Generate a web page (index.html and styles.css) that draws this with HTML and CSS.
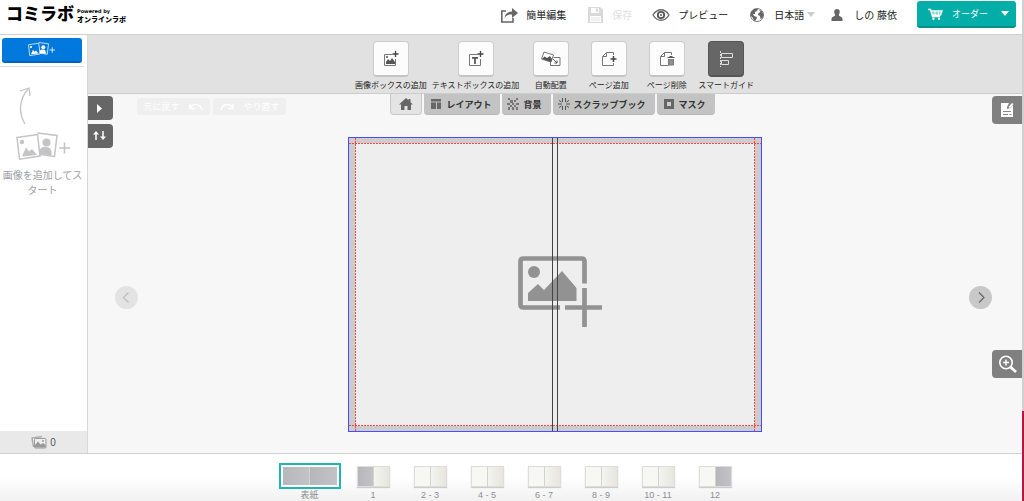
FILE: index.html
```html
<!DOCTYPE html>
<html lang="ja">
<head>
<meta charset="utf-8">
<meta name="viewport" content="width=device-width, initial-scale=1">
<title>コミラボ</title>
<link rel="stylesheet" href="styles.css">
</head>
<body>
<div class="app">
  <header class="header">
    <div class="logo">
      <span class="logo-main">コミラボ</span>
      <span class="logo-sub"><small>Powered by</small><b>オンラインラボ</b></span>
    </div>
    <nav class="menu">
      <button class="menu-item"><svg width="18" height="16" viewBox="0 0 18 16"><path d="M6 4H1.800v11H13v-4" fill="none" stroke="#666" stroke-width="1.600"/><path d="M4.500 11C5 6.500 8 4.500 12 4.500V1l6 5-6 5V7.500C9 7.300 6.500 8 4.500 11z" fill="#666"/></svg>簡単編集</button>
      <button class="menu-item" disabled><svg width="18" height="16" viewBox="0 0 18 16"><path d="M2 0h12l3 3v13H2z" fill="#d9d9d9"/><path d="M5 1h8v5H5zM4 9h11v6H4z" fill="#fff"/><path d="M10 1.500h2v3.500h-2z" fill="#d9d9d9"/><path d="M5 11h9M5 13h9" stroke="#e4e4e4"/></svg>保存</button>
      <button class="menu-item"><svg width="18" height="16" viewBox="0 0 18 16"><path d="M1 8c4.500-7 11.500-7 16 0-4.500 7-11.500 7-16 0z" fill="none" stroke="#666" stroke-width="1.300"/><circle cx="9" cy="8" r="3.200" fill="none" stroke="#555" stroke-width="1.800"/><circle cx="9" cy="8" r="1" fill="#555"/></svg>プレビュー</button>
      <button class="menu-item lang"><svg width="18" height="16" viewBox="0 0 18 16"><circle cx="9" cy="8" r="6.500" fill="#fff" stroke="#777"/><path d="M3 5l3-3 4 0-1 2-2 1 0 2-2 0 1 2 3 1-1 3-2 1-1-3-2-2zM11 3l3 1 1.500 4-1 3-2 1-.5-3-2-1 .5-2 2-1z" fill="#666"/></svg>日本語<i class="caret"></i></button>
      <button class="menu-item user"><svg width="12" height="16" viewBox="0 0 12 16"><path d="M6 2c3 0 3.500 3 1.800 6 .2 1.500 3.700 1.500 3.700 4v2H.5v-2c0-2.500 3.500-2.500 3.700-4C2.500 5 3 2 6 2z" fill="#666"/></svg>しの 藤依</button>
      <button class="order"><svg width="15" height="12" viewBox="0 0 15 12"><path d="M0 1.500h2.500L4.500 8.500h7.500M3 3h11l-1.500 4H4" fill="none" stroke="#fff" stroke-width="1.400"/><path d="M4 5h9M7 3v4M10.500 3v4" stroke="#fff"/><circle cx="5.500" cy="10.700" r="1.200" fill="#fff"/><circle cx="11" cy="10.700" r="1.200" fill="#fff"/></svg>オーダー<i class="caret"></i></button>
    </nav>
  </header>

  <div class="main">
    <aside class="sidebar">
      <div class="add-wrap">
        <button class="add" aria-label="画像を追加"><svg width="28" height="15" viewBox="0 0 56 30"><use href="#photos"/></svg></button>
      </div>
      <div class="hint">
        <svg width="14" height="38" viewBox="0 0 14 38"><path d="M6 37C0 27-1 14 9 2M1 4l9-3 1 8" fill="none" stroke="#c4c4c7" stroke-width="1.300"/></svg>
        <svg class="hint-pic" width="56" height="30" viewBox="0 0 56 30">
          <g id="photos"><path d="M1 5.500l20.500-3L24 24 3.500 27.200z" fill="none" stroke="currentColor" stroke-width="1.500"/><circle cx="6" cy="10" r="2.200" fill="currentColor"/><path d="M6 24.500l4-9 3 4 3-2.500 5 6z" fill="currentColor"/><path d="M21.500 1L41 3.500 38.500 24.500 24 22.500" fill="none" stroke="currentColor" stroke-width="1.500"/><circle cx="30.500" cy="10.500" r="4" fill="currentColor"/><path d="M23.500 22c-.5-6 2-7 6-7 5 0 6.500 3 6 8.500z" fill="currentColor"/><path d="M43 16h11M48.500 10.500v11" stroke="currentColor" stroke-width="1.600"/></g>
        </svg>
        <p>画像を追加してスタート</p>
      </div>
      <div class="count"><svg width="16" height="13" viewBox="0 0 16 13"><path d="M2.500 11L1 2l10-1.500" fill="none" stroke="#aaa" stroke-width="1.400"/><rect x="3.500" y="2.500" width="11.500" height="9.500" rx="1" fill="#eee" stroke="#999"/><path d="M4 11.500V9l3-3.500 2.500 3L12 7l2.500 2v2.500z" fill="#999"/><circle cx="12" cy="5" r="1" fill="#999"/></svg>0</div>
    </aside>

    <main class="work">
      <div class="toolbar">
        <button class="tool"><span class="box"><svg width="16" height="16" viewBox="0 0 16 16"><path d="M9.500 3.500H1.500v11h11V8" fill="none" stroke="#777"/><path d="M3 13V11l2-3 2 2 2-3 3 4v2z" fill="#555"/><circle cx="4" cy="6" r="1" fill="#555"/><path d="M12.500 0v6M9.500 3h6" stroke="#444" stroke-width="1.300"/></svg></span>画像ボックスの追加</button>
        <button class="tool"><span class="box"><svg width="16" height="16" viewBox="0 0 16 16"><path d="M9.500 3.500H1.500v11h11V8" fill="none" stroke="#777"/><path d="M4 6.800h6M7 6.800V13" stroke="#555" stroke-width="1.700"/><path d="M12.500 0v6M9.500 3h6" stroke="#444" stroke-width="1.300"/></svg></span>テキストボックスの追加</button>
        <button class="tool"><span class="box"><svg width="20" height="16" viewBox="0 0 20 16"><path d="M3 1l9.500 3-2.500 7L.5 8z" fill="#fff" stroke="#777"/><path d="M1 8l2.500-2.500L6 7l3-2 2 3-1 3z" fill="#555"/><path d="M12.500 6.500H19v8H9.500V11" fill="none" stroke="#777"/><path d="M12 8l4 4M16 9.500V12h-2.500" fill="none" stroke="#555"/></svg></span>自動配置</button>
        <button class="tool"><span class="box"><svg width="16" height="16" viewBox="0 0 16 16"><path d="M12.500 4V1.500h-7l-4 4v9h11V12M5.500 1.500v4h-4" fill="none" stroke="#777"/><path d="M12.500 5v6M9.500 8h6" stroke="#444" stroke-width="1.500"/></svg></span>ページ追加</button>
        <button class="tool"><span class="box"><svg width="16" height="16" viewBox="0 0 16 16"><path d="M12.500 4V1.500h-7l-4 4v9h8M5.500 1.500v4h-4" fill="none" stroke="#777"/><path d="M8.500 6.500h7M10.500 5.500h3" stroke="#555"/><path d="M9 8h6v5.500q0 1-1 1h-4q-1 0-1-1z" fill="#777"/><path d="M11 8.500v5M13 8.500v5" stroke="#bbb" stroke-width=".7"/></svg></span>ページ削除</button>
        <button class="tool active" aria-pressed="true"><span class="box"><svg width="16" height="16" viewBox="0 0 16 16"><path d="M2.500 0v16" stroke="#ddd" stroke-dasharray="2 1"/><path d="M3.500 2.500h11v4h-11zM3.500 9.500h7v4h-7z" fill="none" stroke="#ddd"/></svg></span>スマートガイド</button>
      </div>

      <div class="stage">
        <section class="side left">
          <div class="rail">
            <button aria-label="開く"><svg width="24" height="24" viewBox="0 0 24 24"><path d="M9 8l5 4.500L9 17z" fill="#fff"/></svg></button>
            <button aria-label="並べ替え"><svg width="24" height="24" viewBox="0 0 24 24"><path d="M8 16V9M15 7v7" stroke="#fff" stroke-width="1.500"/><path d="M5 10.500L8 7l3 3.500zM12 12.500l3 3.500 3-3.500z" fill="#fff"/></svg></button>
          </div>
          <div class="side-body">
            <div class="history">
              <button disabled>元に戻す<svg width="16" height="10" viewBox="0 0 16 10"><path d="M2 6C5 1 12 1 14 8M2 2v4.500h5" fill="none" stroke="#fff" stroke-width="1.400"/></svg></button>
              <button disabled><svg width="16" height="10" viewBox="0 0 16 10"><path d="M14 6C11 1 4 1 2 8M14 2v4.500H9" fill="none" stroke="#fff" stroke-width="1.400"/></svg>やり直す</button>
            </div>
            <div class="turn"><button class="prev" aria-label="前のページ" disabled><svg width="23" height="23" viewBox="0 0 23 23"><path d="M13.500 6.500l-5 5 5 5" fill="none" stroke="#bbb" stroke-width="1.200"/></svg></button></div>
          </div>
        </section>

        <section class="center">
          <nav class="tabs">
            <button class="tab home" aria-label="ホーム"><svg width="14" height="12" viewBox="0 0 14 12"><path d="M7 0l2.500 2.300V1h2v3.200L14 6.500h-2V12H8.500V8h-3v4H2V6.500H0z" fill="#666"/></svg></button>
            <button class="tab"><svg width="10" height="10" viewBox="0 0 10 10"><path d="M0 0h10v2.500H0zM0 3.500h5V10H0zM6 3.500h4V10H6z" fill="#666"/></svg>レイアウト</button>
            <button class="tab"><svg width="12" height="12" viewBox="0 0 12 12"><path d="M1 0h2v2H1zM9 0h2v2H9zM3 2h3v3H3zM7 2h2v2H7zM0 5h3v2H0zM5 5h2v2H5zM9 5h3v2H9zM3 7h2v2H3zM7 7h2v2H7zM1 9h2v3H1zM5 9h2v3H5zM9 9h2v3H9z" fill="#777"/></svg>背景</button>
            <button class="tab"><svg width="12" height="12" viewBox="0 0 12 12"><path d="M4.500 0v4M7.500 0v4M4.500 8v4M7.500 8v4M0 6h4M8 6h4M1 2.500l2.500 1.500M11 2.500L8.500 4M1 9.500l2.500-1.500M11 9.500L8.500 8" stroke="#555"/></svg>スクラップブック</button>
            <button class="tab"><svg width="10" height="10" viewBox="0 0 10 10"><rect x="1.500" y="1.500" width="7" height="7" fill="#ccc" stroke="#666" stroke-width="3"/></svg>マスク</button>
          </nav>
          <div class="book">
            <svg width="94" height="86" viewBox="0 0 94 86"><path d="M52 65.500H15.500q-3 0-3-3V19.500q0-3 3-3h58q3 0 3 3V41.500M57 65.500h37M76.500 46v39" fill="none" stroke="#929292" stroke-width="4.700"/><circle cx="26" cy="30" r="6" fill="#929292"/><path d="M20 59v-8l10-9 6 6 18-19 14.500 17v13z" fill="#929292"/></svg>
            <span class="spine"></span>
          </div>
        </section>

        <section class="side right">
          <div class="turn"><button class="next" aria-label="次のページ"><svg width="23" height="23" viewBox="0 0 23 23"><path d="M10 6.500l5 5-5 5" fill="none" stroke="#666" stroke-width="1.200"/></svg></button></div>
          <div class="rail">
            <button aria-label="メモ"><svg width="30" height="28" viewBox="0 0 30 28"><path d="M9 7h8l-2 4v2l3-1 3-3v12H9z" fill="#fff"/><path d="M16.500 11l3.500-4 1.500 1-3.500 4z" fill="#fff"/><path d="M11 15.500h8M11 18.500h5M17.500 18.500h2" stroke="#888"/></svg></button>
            <button aria-label="拡大"><svg width="30" height="28" viewBox="0 0 30 28"><circle cx="14" cy="12.500" r="6.200" fill="none" stroke="#fff" stroke-width="1.600"/><path d="M11 12.500h6M14 9.500v6" stroke="#fff" stroke-width="1.500"/><path d="M18.500 17l5.500 5" stroke="#fff" stroke-width="2.800"/></svg></button>
          </div>
        </section>
      </div>
    </main>
  </div>

  <footer class="pages">
    <button class="page cover"><span class="thumb"><i class="gray"></i><i class="gray"></i></span>表紙</button>
    <button class="page"><span class="thumb"><i class="gray"></i><i class="paper"></i></span>1</button>
    <button class="page"><span class="thumb"><i></i><i class="paper"></i></span>2 - 3</button>
    <button class="page"><span class="thumb"><i></i><i class="paper"></i></span>4 - 5</button>
    <button class="page"><span class="thumb"><i></i><i class="paper"></i></span>6 - 7</button>
    <button class="page"><span class="thumb"><i></i><i class="paper"></i></span>8 - 9</button>
    <button class="page"><span class="thumb"><i></i><i class="paper"></i></span>10 - 11</button>
    <button class="page"><span class="thumb"><i></i><i class="gray"></i></span>12</button>
  </footer>
</div>
<div class="edge"></div>
</body>
</html>
```
FILE: styles.css
```css
* { box-sizing: border-box; }
body {
  margin: 0;
  display: flex;
  min-height: 100vh;
  font-family: "Liberation Sans", "Noto Sans CJK JP", sans-serif;
  font-size: 10px;
  color: #222;
  background: #fff;
}
button {
  margin: 0;
  padding: 0;
  border: 0;
  background: none;
  font: inherit;
  color: inherit;
  cursor: pointer;
}
svg { display: block; flex: none; }
p { margin: 0; }

.app { flex: 1; min-width: 0; display: flex; flex-direction: column; }
.edge { width: 2px; background: linear-gradient(#d0d0d0 82%, #b5173f 82%); }

.header {
  display: flex;
  justify-content: space-between;
  height: 35px;
  padding: 1px 6px 0;
  border-bottom: 1px solid #d0d0d0;
}
.logo { display: flex; gap: 3px; color: #000; }
.logo-main { font-size: 17px; line-height: 27px; font-weight: 900; }
.logo-sub { display: flex; flex-direction: column; padding-top: 7px; }
.logo-sub small { font: bold 5px/7px "DejaVu Sans", sans-serif; }
.logo-sub b { font-size: 7px; line-height: 9px; font-weight: 900; }
.menu { display: flex; align-items: flex-start; gap: 20px; }
.menu-item { display: flex; align-items: center; gap: 8px; height: 27px; white-space: nowrap; }
.menu-item:disabled { color: #e0e0e0; }
.user { gap: 11px; }
.caret { border: 4px solid transparent; border-top: 5px solid #ccc; border-bottom: 0; }
.lang .caret { margin: 0 -4px 0 -5px; }
.order {
  display: flex;
  align-items: center;
  height: 27px;
  padding: 0 7px 0 11px;
  border-radius: 3px;
  border-bottom: 2px solid #078f89;
  background: #04aea8;
  color: #fff;
  font-size: 9px;
}
.order svg { margin-right: 9px; }
.order .caret { margin-left: 13px; border-top-color: #fff; }

.main { flex: 1; display: flex; }
.sidebar { width: 88px; display: flex; flex-direction: column; border-right: 1px solid #d8d8d8; }
.add-wrap { margin-right: 3px; padding: 3px 2px 3px; border-bottom: 1px solid #ddd; }
.add {
  width: 100%;
  height: 25px;
  display: grid;
  place-items: center;
  border-radius: 3px;
  border-bottom: 2px solid #0062bb;
  background: #0078dc;
  color: #fff;
}
.hint { flex: 1; padding: 20px 4px 0 2px; color: #a0a0a5; text-align: center; line-height: 15px; }
.hint svg { margin-left: 17px; color: #c4c4c7; }
.hint .hint-pic { margin: 7px 0 6px 14px; }
.count {
  display: flex;
  align-items: center;
  justify-content: center;
  gap: 3px;
  height: 22px;
  background: #e9e9e9;
  color: #555;
}

.work { flex: 1; min-width: 0; display: flex; flex-direction: column; background: #f7f7f7; }
.toolbar {
  display: flex;
  justify-content: center;
  gap: 5px;
  height: 59px;
  padding: 6px 1px 0 0;
  border-bottom: 1px solid #ccc;
  background: #e1e1e1;
}
.tool {
  display: flex;
  flex-direction: column;
  align-items: center;
  gap: 3px;
  min-width: 53px;
  font-size: 8px;
  line-height: 12px;
  white-space: nowrap;
}
.box {
  width: 36px;
  height: 36px;
  display: grid;
  place-items: center;
  border: 1px solid #ccc;
  border-bottom: 2px solid #c4c4c4;
  border-radius: 4px;
  background: #fcfcfc;
}
.active .box { background: #666; border-color: #555; }

.stage { flex: 1; display: flex; }
.side { flex: 1; min-width: 0; display: flex; }
.rail { display: flex; flex-direction: column; padding-top: 2px; }
.left .rail { gap: 4px; }
.left .rail button { width: 25px; height: 24px; border-radius: 0 4px 4px 0; background: #666; }
.side-body { display: flex; flex-direction: column; padding: 4px 0 0 2px; }
.history { display: flex; gap: 3px; margin-left: 22px; }
.history button {
  display: flex;
  align-items: center;
  justify-content: center;
  gap: 8px;
  width: 73px;
  height: 17px;
  border-radius: 3px;
  background: #efefef;
  color: #fff;
  font-size: 9px;
  white-space: nowrap;
}
.turn { flex: 1; display: flex; align-items: center; padding-top: 26px; }
.turn button { border-radius: 50%; background: #c8c8c8; }
.turn .prev { background: #e3e3e3; }
.right { justify-content: flex-end; }
.right .turn { justify-content: flex-end; padding-top: 47px; }
.right .rail { justify-content: space-between; padding-bottom: 75px; }
.right .rail button { border-radius: 4px 0 0 4px; background: #808080; }

.center { width: 44.4%; display: flex; flex-direction: column; align-items: center; }
.tabs { display: flex; gap: 2px; margin-right: 5px; }
.tab {
  display: flex;
  align-items: center;
  gap: 5px;
  height: 21px;
  padding: 0 9px 0 7px;
  border-radius: 0 0 4px 4px;
  border-bottom: 1px solid #b8b8b8;
  background: #c3c3c3;
  font-size: 9px;
  font-weight: bold;
  color: #333;
  white-space: nowrap;
}
.tab:nth-child(3), .tab:nth-child(4) { padding-left: 5px; gap: 4px; }
.home { padding: 0 8px; border: 1px solid #c8c8c8; border-top: 0; background: #e4e4e4; }
.book {
  --guide: #ff4040 0 2px, transparent 2px 3px;
  position: relative;
  width: 100%;
  aspect-ratio: 414 / 295;
  margin-top: 22px;
  display: grid;
  place-items: center;
  border: 1px solid #4a4aff;
  background: linear-gradient(#eee, #eee) content-box, #ccc;
  padding: 5px 6px;
}
.book::before {
  content: "";
  position: absolute;
  inset: 5px 0;
  background:
    repeating-linear-gradient(90deg, var(--guide)) top / 100% 1px no-repeat,
    repeating-linear-gradient(90deg, var(--guide)) bottom / 100% 1px no-repeat;
}
.book::after {
  content: "";
  position: absolute;
  inset: 0 6px;
  background:
    repeating-linear-gradient(var(--guide)) left / 1px 100% no-repeat,
    repeating-linear-gradient(var(--guide)) right / 1px 100% no-repeat;
}
.spine {
  position: absolute;
  top: 0;
  bottom: 0;
  left: calc(50% - 3px);
  width: 6px;
  border: solid #444;
  border-width: 0 1px;
}

.pages {
  display: flex;
  justify-content: center;
  height: 48px;
  padding-top: 9px;
  border-top: 1px solid #d0d0d0;
  background: linear-gradient(#fff 50%, #f1f1f1);
  color: #8e8e93;
}
.page {
  display: flex;
  flex-direction: column;
  align-items: center;
  width: 57px;
  padding-top: 3px;
  font-size: 9px;
  line-height: 10px;
}
.thumb {
  display: flex;
  width: 33px;
  height: 21px;
  margin-bottom: 3px;
  border: 1px solid #ddd;
  box-shadow: 0 1px 1px #ccc;
}
.thumb i { flex: 1; background: #f7f7f4; }
.thumb i + i { border-left: 1px solid #d2d2ce; }
.thumb .paper { background: linear-gradient(90deg, #f4f4f0, #e6e6de); }
.thumb .gray { background: linear-gradient(90deg, #b6b6bb, #c2c2c7); }
.cover { width: 62px; margin-right: 4px; padding-top: 0; }
.cover .thumb {
  width: 62px;
  height: 26px;
  margin-bottom: 1px;
  padding: 2px;
  border: 2px solid #1fb5b0;
  box-shadow: none;
  background: #fff;
}
```
